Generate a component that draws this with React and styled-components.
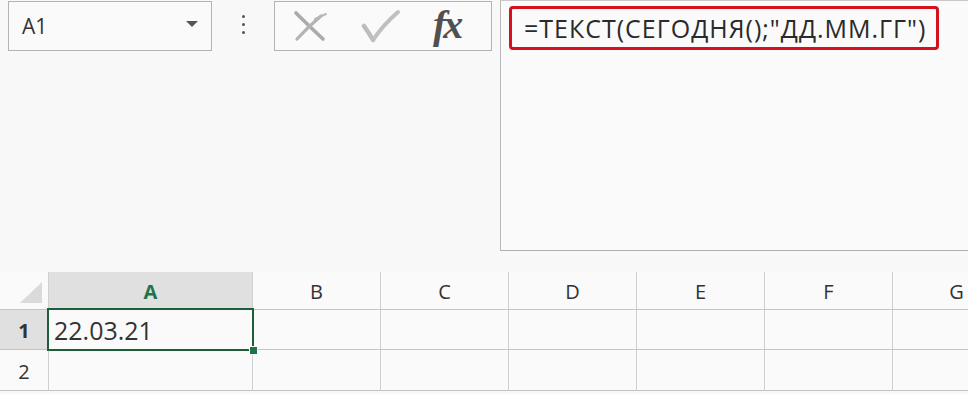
import React from 'react';
import styled, { createGlobalStyle } from 'styled-components';

const GlobalStyle = createGlobalStyle`
  html, body {
    margin: 0;
    padding: 0;
    background: #f8f8f8;
  }
  body {
    font-family: "Open Sans", "Noto Sans", sans-serif;
    color: #222;
    overflow: hidden;
  }
`;

const Page = styled.div`
  width: 968px;
  height: 394px;
  overflow: hidden;
  background: #f8f8f8;
`;

const Top = styled.div`
  display: flex;
  align-items: flex-start;
  height: 251px;
`;

const Tools = styled.div`
  display: flex;
  align-items: flex-start;
  padding: 1px 8px 0 8px;
`;

const NameBox = styled.div`
  box-sizing: border-box;
  width: 204px;
  height: 50px;
  border: 1px solid #b4b4b4;
  background: #fafafa;
  display: flex;
  align-items: center;
  justify-content: space-between;
  padding: 0 13px 0 13px;
  font-size: 21px;
  color: #333;
`;

const Arrow = styled.span`
  width: 0;
  height: 0;
  border-left: 6px solid transparent;
  border-right: 6px solid transparent;
  border-top: 6px solid #555;
  margin-top: -4px;
`;

const Dots = styled.div`
  width: 62px;
  height: 50px;
  display: flex;
  flex-direction: column;
  align-items: center;
  justify-content: center;
  gap: 5px;
  padding-bottom: 3px;
  box-sizing: border-box;
`;

const Dot = styled.span`
  width: 3px;
  height: 3px;
  border-radius: 50%;
  background: #555;
`;

const FuncBox = styled.div`
  box-sizing: border-box;
  width: 218px;
  height: 50px;
  border: 1px solid #b4b4b4;
  background: #fafafa;
  display: flex;
  align-items: center;
  padding-left: 18px;
  gap: 32px;
`;

const Fx = styled.span`
  font-family: "Liberation Serif", "DejaVu Serif", serif;
  font-style: italic;
  font-weight: 700;
  font-size: 40px;
  line-height: 1;
  color: #505050;
  letter-spacing: -3px;
  margin-top: -2px;
`;

const FormulaBar = styled.div`
  flex: 1;
  box-sizing: border-box;
  height: 251px;
  border-left: 1px solid #b8b8b8;
  border-top: 1px solid #c8c8c8;
  border-bottom: 1px solid #b0b0b0;
  background: #fafafa;
  padding: 5px 0 0 8px;
`;

const Highlight = styled.div`
  display: inline-block;
  box-sizing: border-box;
  height: 44px;
  border: 3px solid #d5111c;
  border-radius: 4px;
  padding: 0 10px 0 12px;
  font-size: 25px;
  letter-spacing: 1px;
  line-height: 38px;
  color: #2a2a2a;
  white-space: nowrap;
`;

const Sheet = styled.div`
  margin-top: 21px;
  display: grid;
  grid-template-columns: 49px 204px repeat(6, 128px);
  grid-template-rows: 38px 40px 41px;
`;

const Cell = styled.div`
  position: relative;
  box-sizing: border-box;
  border-right: 1px solid #cfcfcf;
  border-bottom: 1px solid #c4c4c4;
  background: ${(p) => (p.$active ? '#e0e0e0' : '#fafafa')};
  display: flex;
  align-items: center;
  justify-content: ${(p) => (p.$head ? 'center' : 'flex-start')};
  font-size: ${(p) => (p.$head ? '20px' : '25px')};
  font-weight: ${(p) => (p.$active ? 700 : 400)};
  color: ${(p) => (p.$green ? '#217346' : '#333')};
  padding-left: ${(p) => (p.$head ? '0' : '5px')};
  padding-top: ${(p) => (p.$head ? '2px' : '0')};
  z-index: ${(p) => (p.$selected ? 2 : 'auto')};
`;

const Corner = styled(Cell)`
  &::after {
    content: '';
    position: absolute;
    right: 6px;
    bottom: 6px;
    width: 0;
    height: 0;
    border-left: 22px solid transparent;
    border-bottom: 21px solid #dadada;
  }
`;

const Selection = styled.div`
  position: absolute;
  left: -2px;
  top: -2px;
  right: -2px;
  bottom: -2px;
  border: 2px solid #1d5f38;
  pointer-events: none;
`;

const Handle = styled.div`
  position: absolute;
  right: -6px;
  bottom: -6px;
  width: 7px;
  height: 7px;
  background: #217346;
  border: 1px solid #fafafa;
`;

const columns = ['A', 'B', 'C', 'D', 'E', 'F', 'G'];

const CancelIcon = () => (
  <svg width="36" height="32" viewBox="0 0 36 32">
    <path d="M3 3 Q14 14 30 29" stroke="#ababab" strokeWidth="3.6" fill="none" strokeLinecap="round" />
    <path d="M4 29 Q16 16 28 6" stroke="#b3b3b3" strokeWidth="3.2" fill="none" strokeLinecap="round" />
    <path d="M22 9 L33 4" stroke="#b8b8b8" strokeWidth="2" fill="none" strokeLinecap="round" />
  </svg>
);

const CheckIcon = () => (
  <svg width="40" height="34" viewBox="0 0 40 34">
    <path d="M3 17 Q8 24 12 31" stroke="#bdbdbd" strokeWidth="4.5" fill="none" strokeLinecap="round" />
    <path d="M12 31 Q22 16 37 3" stroke="#c0c0c0" strokeWidth="4" fill="none" strokeLinecap="round" />
  </svg>
);

const App = () => (
  <Page>
    <GlobalStyle />
    <Top>
      <Tools>
        <NameBox>
          A1
          <Arrow />
        </NameBox>
        <Dots>
          <Dot />
          <Dot />
          <Dot />
        </Dots>
        <FuncBox>
          <CancelIcon />
          <CheckIcon />
          <Fx>fx</Fx>
        </FuncBox>
      </Tools>
      <FormulaBar>
        <Highlight>=ТЕКСТ(СЕГОДНЯ();"ДД.ММ.ГГ")</Highlight>
      </FormulaBar>
    </Top>
    <Sheet>
      <Corner $head />
      {columns.map((c) => (
        <Cell key={c} $head $active={c === 'A'} $green={c === 'A'}>
          {c}
        </Cell>
      ))}
      <Cell $head $active>1</Cell>
      <Cell $selected>
        22.03.21
        <Selection>
          <Handle />
        </Selection>
      </Cell>
      {columns.slice(1).map((c) => (
        <Cell key={`1${c}`} />
      ))}
      <Cell $head>2</Cell>
      {columns.map((c) => (
        <Cell key={`2${c}`} />
      ))}
    </Sheet>
  </Page>
);

export default App;
